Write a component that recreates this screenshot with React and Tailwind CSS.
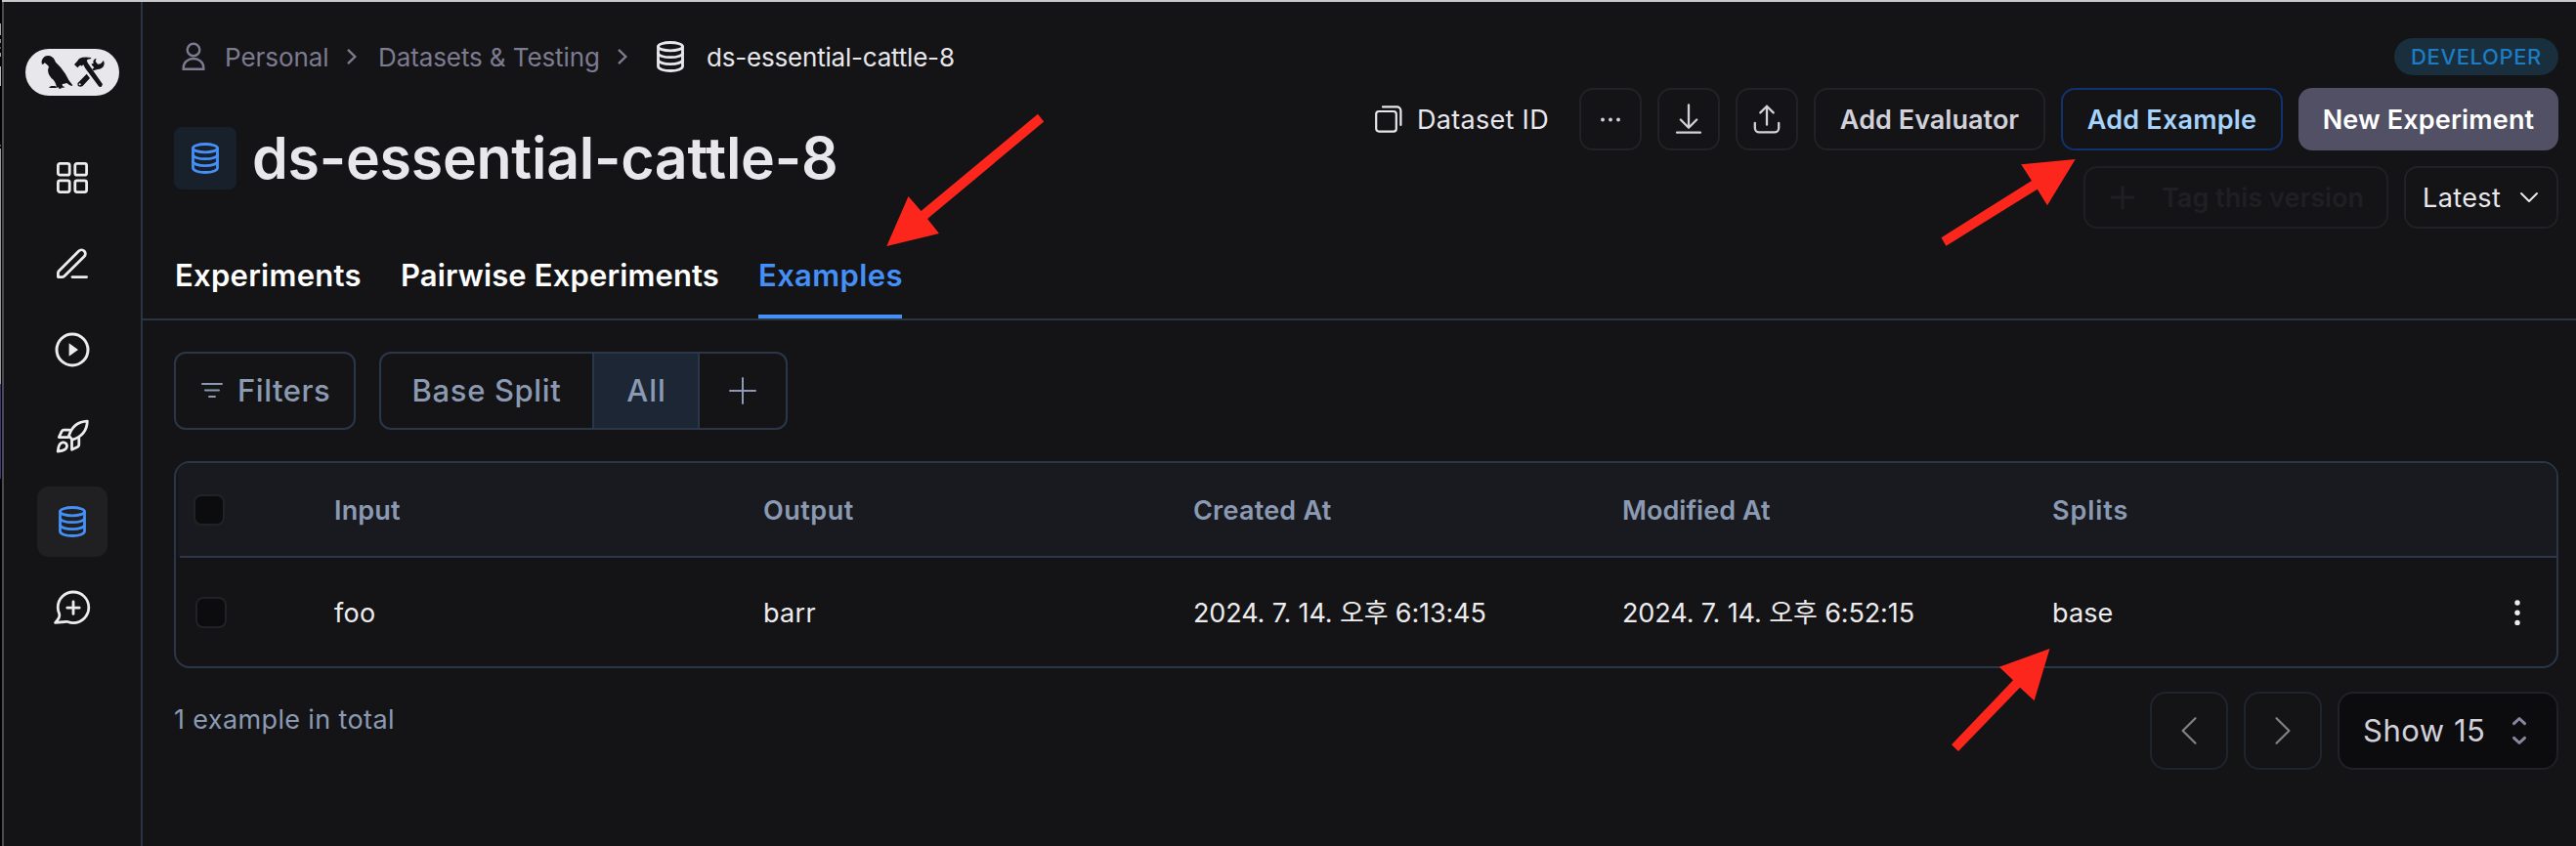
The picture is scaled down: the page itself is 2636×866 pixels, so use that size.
const svgBase = {
  fill: 'none',
  stroke: 'currentColor',
  strokeLinecap: 'round',
  strokeLinejoin: 'round',
};

function Logo() {
  return (
    <svg className="h-12 w-24 shrink-0" viewBox="18 30 288 144">
      <rect x="18" y="30" width="288" height="144" rx="72" fill="#e8e7ec" />
      <g fill="#141416">
        <path d="M68 76V67Q73 51 88 51Q101 52 107 63L111 71Q128 86 141 107L151 126L163 142L160 144L153 141L145 135Q137 138 131 138L132 144L138 147L137 149H129L127 152H121L119 148L110 150H92L91 147L98 145L93 144H108L114 146L109 133L104 125Q88 113 87 95L90 84L83 77L77 73L72 78Z" />
        <path d="M168 78L177 68L183 60Q197 53 219 57L220 60L210 62L206 66L210 74L255 139L251 147L244 146L202 90L196 79L190 83L188 80L184 82L178 88Z" />
        <path d="M236 59L233 68L240 77L249 76L258 66Q262 73 258 83Q253 92 239 93L227 97L223 92L229 88L220 77L227 74Q223 63 236 59Z" />
        <path
          fillRule="evenodd"
          d="M178 136L206 107L216 120L194 144Q186 149 179 143ZM185 136A3 3 0 1 0 185 142A3 3 0 1 0 185 136Z"
        />
      </g>
    </svg>
  );
}

function DatabaseIcon({ className = '' }) {
  return (
    <svg className={`h-8 shrink-0 ${className}`} viewBox="0 0 28 32" preserveAspectRatio="none" {...svgBase} strokeWidth="2.8">
      <ellipse cx="14" cy="5.7" rx="12.5" ry="4.2" />
      <path d="M1.5 5.7v20.4c0 2.4 5.6 4.4 12.5 4.4s12.5-2 12.5-4.4V5.7" />
      <path d="M1.5 12.4c0 2.4 5.6 4.3 12.5 4.3s12.5-1.9 12.5-4.3" />
      <path d="M1.5 19.3c0 2.4 5.6 4.3 12.5 4.3s12.5-1.9 12.5-4.3" />
    </svg>
  );
}

function GridIcon() {
  return (
    <svg className="size-8" viewBox="0 0 32 32" {...svgBase} strokeWidth="2.8">
      <rect x="1.4" y="1.4" width="11.8" height="11.8" rx="2" />
      <rect x="18.8" y="1.4" width="11.8" height="11.8" rx="2" />
      <rect x="1.4" y="18.8" width="11.8" height="11.8" rx="2" />
      <rect x="18.8" y="18.8" width="11.8" height="11.8" rx="2" />
    </svg>
  );
}

function EditIcon() {
  return (
    <svg className="h-8 w-8" viewBox="0 0 32 32" {...svgBase} strokeWidth="2.8">
      <path d="M16 29.6h14.6" />
      <path d="M1.4 29.6v-4.2c.1-.9.4-1.6 1-2.2L22.6 3a3.95 3.95 0 0 1 5.6 5.6L8 28.6c-.6.6-1.3.9-2.2 1Z" />
    </svg>
  );
}

function PlayIcon() {
  return (
    <svg className="h-9 w-9" viewBox="0 0 36 36" {...svgBase} strokeWidth="3">
      <circle cx="18" cy="18" r="16" />
      <path d="M14.6 11.2L24 18l-9.4 6.8Z" fill="currentColor" stroke="none" />
    </svg>
  );
}

function RocketIcon() {
  return (
    <svg className="h-9 w-9" viewBox="0 0 36 36" {...svgBase} strokeWidth="2.8">
      <path d="M14.5 18.2C17.2 9.5 23 3.6 33.3 3.2C33 13.5 27 19.3 18 22.2Z" />
      <path d="M15 12.2H9.4c-1 0-1.8.5-2.3 1.4L4.3 19.6H14" />
      <path d="M24.8 20.8v6.4c0 1-.5 1.8-1.4 2.3L17.5 32.2V22.2" />
      <path d="M11.8 26.2a4.2 4.2 0 0 1-1.6 6c-2 1.2-4.2 1.5-7 1.8c.2-2.8.6-5.3 1.8-7a4.2 4.2 0 0 1 6.8-.8Z" />
    </svg>
  );
}

function MessagePlusIcon() {
  return (
    <svg className="h-9 w-[38px]" viewBox="0 0 38 36" {...svgBase} strokeWidth="2.8">
      <path d="M20 2a15.8 15.8 0 1 1 0 31.6c-2.3 0-4-.5-5.6-1.1c-1-.4-1.9-.2-3 0L1.6 33.4c1.5-1.7 2.8-3.3 3.8-5.3c.7-1.4.7-2.6.2-4C4.7 22 4.2 19.8 4.2 17.7A15.8 15.8 0 0 1 20 2Z" />
      <path d="M20 12v12.4M13.8 18.2h12.4" />
    </svg>
  );
}

function PersonIcon() {
  return (
    <svg className="h-[30px] w-6 shrink-0" viewBox="0 0 24 30" {...svgBase} strokeWidth="2.4">
      <circle cx="12" cy="8" r="6.3" />
      <path d="M1.7 27.7v-1.4a10.3 9.3 0 0 1 20.6 0v1.4Z" strokeLinejoin="miter" />
    </svg>
  );
}

function CrumbChevron({ className = '' }) {
  return (
    <svg className={`h-[18px] w-3 shrink-0 text-[#7c7b90] ${className}`} viewBox="0 0 12 18" {...svgBase} strokeLinecap="butt" strokeLinejoin="miter" strokeWidth="2.4">
      <path d="M2 1.8L9.3 9L2 16.2" />
    </svg>
  );
}

function CopyIcon() {
  return (
    <svg className="h-7 w-7 shrink-0" viewBox="0 0 28 28" {...svgBase} strokeWidth="2.2">
      <rect x="1.2" y="6" width="20.6" height="20.6" rx="2.8" />
      <path d="M8 1.4H22.4a4 4 0 0 1 4 4V20" />
    </svg>
  );
}

function Arrows() {
  return (
    <svg className="pointer-events-none absolute inset-0 h-[866px] w-[2636px]" viewBox="0 0 2636 866" fill="#fd261c">
      <path d="M907.3 252L929.5 201L942.5 216L1062 116.7L1068.2 124.5L949 224L961 239Z" />
      <path d="M2123.7 163L2068.2 168.2L2079 185L1986.5 243.3L1991.4 251.7L2084.8 193.7L2095 210.3Z" />
      <path d="M2097.5 664L2045.8 682.7L2060 696.3L1997 762.3L2004 769L2067 703.7L2081.6 717.3Z" />
    </svg>
  );
}

function Sidebar() {
  return (
    <aside className="flex w-[142px] shrink-0 flex-col items-center border-r-2 border-[#2a3543] pt-12 text-[#ececee]">
      <Logo />
      <nav className="mt-12 flex flex-col gap-4">
        <div className="flex size-[72px] items-center justify-center"><GridIcon /></div>
        <div className="flex size-[72px] items-center justify-center"><EditIcon /></div>
        <div className="flex size-[72px] items-center justify-center"><PlayIcon /></div>
        <div className="flex size-[72px] items-center justify-center"><RocketIcon /></div>
        <div className="flex size-[72px] items-center justify-center rounded-xl bg-[#202022] text-[#4490f6]">
          <DatabaseIcon className="w-7" />
        </div>
        <div className="flex size-[72px] items-center justify-center"><MessagePlusIcon /></div>
      </nav>
    </aside>
  );
}

function Breadcrumb() {
  return (
    <div className="flex h-10 items-center pl-2 text-[26px] whitespace-nowrap text-[#7c7b90]">
      <PersonIcon />
      <span className="ml-5 w-[106px] tracking-[-0.05px]">Personal</span>
      <CrumbChevron className="ml-[18px]" />
      <span className="ml-[21px] w-[226px] tracking-[-0.1px]">Datasets &amp; Testing</span>
      <CrumbChevron className="ml-[18px]" />
      <DatabaseIcon className="ml-[29px] w-7 text-[#e8e7ec]" />
      <span className="ml-[23px] tracking-[-0.2px] text-[#e8e7ec]">ds-essential-cattle-8</span>
    </div>
  );
}

function Actions() {
  const square = 'flex size-16 shrink-0 items-center justify-center rounded-[14px] border-2 border-[#212126]';
  return (
    <div className="flex items-center gap-4 text-[27px] font-semibold whitespace-nowrap text-[#d2d1da]">
      <div className="flex w-[193px] items-center font-normal text-[#e8e7ec]">
        <CopyIcon />
        <span className="ml-[15px] pt-0.5 tracking-[0.3px]">Dataset ID</span>
      </div>
      <div className={square}>
        <svg className="h-6 w-6" viewBox="0 0 24 24" fill="currentColor">
          <circle cx="4" cy="12.5" r="1.9" />
          <circle cx="12" cy="12.5" r="1.9" />
          <circle cx="20" cy="12.5" r="1.9" />
        </svg>
      </div>
      <div className={square}>
        <svg className="h-8 w-8" viewBox="0 0 32 32" {...svgBase} strokeWidth="2.3">
          <path d="M16 2v23M7.8 17L16 25.2L24.2 17M4 30.2h24" transform="translate(0 -.5)" />
        </svg>
      </div>
      <div className={square}>
        <svg className="h-8 w-8" viewBox="0 0 32 32" {...svgBase} strokeWidth="2.3">
          <path d="M16 22.5V3.5M9.3 10.2L16 3.5L22.7 10.2M3.8 20.8v5a4.4 4.4 0 0 0 4.4 4.4h15.6a4.4 4.4 0 0 0 4.4-4.4v-5" transform="translate(0 -.8)" />
        </svg>
      </div>
      <div className="flex h-16 w-[237px] items-center justify-center rounded-[14px] border-2 border-[#212126] pt-0.5 tracking-[0.04px]">Add Evaluator</div>
      <div className="flex h-16 w-[227px] items-center justify-center rounded-[14px] border-2 border-[#11316f] pt-0.5 tracking-[0.22px] text-[#a6d3fb]">Add Example</div>
      <div className="flex h-16 w-[266px] items-center justify-center rounded-[14px] bg-[#515064] pt-0.5 tracking-[0.16px] text-white">New Experiment</div>
    </div>
  );
}

function VersionRow() {
  return (
    <div className="mt-4 flex gap-4 text-[27px] whitespace-nowrap">
      <div className="flex h-16 w-[312px] items-center rounded-[14px] border-2 border-[#1f1f24] pl-[25px] font-semibold text-[#1f1f24]">
        <svg className="size-[26px]" viewBox="0 0 26 26" fill="none" stroke="currentColor" strokeWidth="3">
          <path d="M13 1v24M1 13h24" />
        </svg>
        <span className="ml-[27px] pt-0.5 tracking-[0.02px]">Tag this version</span>
      </div>
      <div className="flex h-16 w-[158px] items-center rounded-[14px] border-2 border-[#212126] pl-[17px] text-[#e8e7ec]">
        <span className="pt-0.5 tracking-[0.4px]">Latest</span>
        <svg className="ml-[19px] h-3 w-5" viewBox="0 0 20 12" {...svgBase} strokeWidth="2">
          <path d="M2 2l8 8l8-8" />
        </svg>
      </div>
    </div>
  );
}

function Header() {
  return (
    <header className="flex h-[326px] shrink-0 justify-between border-b-2 border-[#2a3543] pr-[18px] pl-8">
      <div className="flex flex-col pt-9">
        <Breadcrumb />
        <div className="mt-[52px] flex h-16 items-center">
          <div className="flex size-16 items-center justify-center rounded-lg bg-[#18202c] text-[#4490f6]">
            <DatabaseIcon className="w-7" />
          </div>
          <h1 className="ml-4 pb-0.5 text-[59px] leading-none font-semibold tracking-[-0.25px] whitespace-nowrap text-[#e8e7ec]">ds-essential-cattle-8</h1>
        </div>
        <div className="mt-auto flex h-[88px] text-[31px] font-semibold whitespace-nowrap text-white">
          <div className="flex w-[191px] items-center pl-px tracking-[0.28px]">Experiments</div>
          <div className="ml-10 flex w-[327px] items-center pl-px tracking-[0.14px]">Pairwise Experiments</div>
          <div className="ml-10 flex w-[147px] items-center border-b-4 border-[#4490f6] pt-1 tracking-[0.38px] text-[#4490f6]">Examples</div>
        </div>
      </div>
      <div className="flex flex-col items-end pt-[37px]">
        <div className="mb-[13px] flex h-[38px] w-[168px] items-center justify-center rounded-full bg-[#192f3e] text-[22px] font-medium tracking-[0.62px] text-[#1d7cc4]">DEVELOPER</div>
        <Actions />
        <VersionRow />
      </div>
    </header>
  );
}

function Toolbar() {
  return (
    <div className="mt-8 flex gap-6 text-[31px] font-medium whitespace-nowrap text-[#8b9ab2]">
      <div className="flex h-20 w-[186px] items-center rounded-xl border-2 border-[#2a3748] pl-[26px]">
        <svg className="h-[18px] w-[22px]" viewBox="0 0 22 18" {...svgBase} strokeWidth="2">
          <path d="M1 2h20M4 8.5h14M8 15h6" />
        </svg>
        <span className="ml-[15px] tracking-[0.53px]">Filters</span>
      </div>
      <div className="flex h-20 w-[418px] overflow-hidden rounded-xl border-2 border-[#2a3748]">
        <div className="flex w-[216px] items-center justify-center tracking-[0.63px]">Base Split</div>
        <div className="flex w-[110px] items-center justify-center border-x-2 border-[#2a3748] bg-[#1c2634] pl-px tracking-[1px]">All</div>
        <div className="flex w-[88px] items-center justify-center">
          <svg className="size-7" viewBox="0 0 28 28" {...svgBase} strokeWidth="2">
            <path d="M14 1v26M1 14h26" />
          </svg>
        </div>
      </div>
    </div>
  );
}

function Checkbox({ className = '' }) {
  return <div className={`size-8 rounded-lg border-2 border-[#212126] bg-[#0c0c0e] ${className}`} />;
}

const columns = 'grid grid-cols-[160px_439px_440px_439px_440px_1fr] items-center ml-0.5 text-[27px] whitespace-nowrap';

function ExamplesTable() {
  return (
    <section className="mt-8 flex h-[212px] flex-col overflow-hidden rounded-2xl border-2 border-[#2a3748]">
      <div className={`h-[95px] bg-[#191a1f] font-semibold text-[#8b9ab2] ${columns}`}>
        <Checkbox className="ml-4" />
        <span className="pt-[3px] tracking-[0.16px]">Input</span>
        <span className="pt-[3px] tracking-[0.5px]">Output</span>
        <span className="pt-[3px] tracking-[0.23px]">Created At</span>
        <span className="pt-[3px] tracking-[0.04px]">Modified At</span>
        <span className="pt-[3px] tracking-[0.93px]">Splits</span>
      </div>
      <div className="ml-1 h-0.5 shrink-0 bg-[#2a3748]" />
      <div className={`h-[111px] text-[#ececee] ${columns}`}>
        <Checkbox className="ml-[18px]" />
        <span className="pt-[3px] tracking-[0.3px]">foo</span>
        <span className="pt-[3px] tracking-[0.32px]">barr</span>
        <span className="pt-[3px] tracking-[-0.13px]">2024. 7. 14. 오후 6:13:45</span>
        <span className="pt-[3px] tracking-[-0.11px]">2024. 7. 14. 오후 6:52:15</span>
        <div className="flex items-center justify-between pr-9">
          <span className="pt-[3px] tracking-[0.1px]">base</span>
          <svg className="h-7 w-2" viewBox="0 0 8 28" fill="currentColor">
            <circle cx="4" cy="4" r="2.7" />
            <circle cx="4" cy="14.2" r="2.7" />
            <circle cx="4" cy="24.4" r="2.7" />
          </svg>
        </div>
      </div>
    </section>
  );
}

function Footer() {
  return (
    <div className="mt-6 flex items-start justify-between whitespace-nowrap">
      <p className="mt-[15px] text-[27px] leading-7 tracking-[0.37px] text-[#8b9ab2]">1 example in total</p>
      <div className="flex gap-4">
        <div className="flex size-20 items-center justify-center rounded-2xl border-2 border-[#1e2530] text-[#828284]">
          <svg className="h-[30px] w-[18px]" viewBox="0 0 18 30" {...svgBase} strokeWidth="2.2">
            <path d="M15.5 2.2L2.6 15l12.9 12.8" />
          </svg>
        </div>
        <div className="flex size-20 items-center justify-center rounded-2xl border-2 border-[#1e2530] text-[#828284]">
          <svg className="h-[30px] w-[18px]" viewBox="0 0 18 30" {...svgBase} strokeWidth="2.2">
            <path d="M2.5 2.2L15.4 15L2.500 27.8" />
          </svg>
        </div>
        <div className="flex h-20 w-[226px] items-center rounded-2xl border-2 border-[#212126] bg-[#0c0c0e] pl-6 text-[31px] text-[#d2d1da]">
          <span className="tracking-[0.51px]">Show 15</span>
          <svg className="ml-[27px] h-8 w-4 text-[#8987a0]" viewBox="0 0 16 32" {...svgBase} strokeWidth="3">
            <path d="M2.5 8.7L8 3.5l5.500 5.200M2.500 23.300L8 28.500l5.500-5.200" />
          </svg>
        </div>
      </div>
    </div>
  );
}

export default function App() {
  return (
    <div className="relative flex h-[866px] w-[2636px] overflow-hidden bg-[#141416] font-['Inter','Noto_Sans_CJK_KR',sans-serif]">
      <div className="flex w-0.5 shrink-0 flex-col bg-black">
        <div className="mt-6 h-3 w-px bg-[#a5a5a5]" />
        <div className="mt-1 h-1 w-px bg-[#8a8a8a]" />
        <div className="mt-1 h-0.5 w-px bg-[#5a5a5a]" />
        <div className="mt-1 h-1 w-px bg-[#a5a5a5]" />
        <div className="mt-2.5 h-5 w-px bg-[#b5b5b5]" />
        <div className="mt-[60px] h-0.5 w-px bg-[#5a5a5a]" />
        <div className="mt-0.5 h-[241px] w-px bg-[#9b9b9b]" />
        <div className="h-[97px] w-px bg-[#4b2e86]" />
      </div>
      <div className="flex flex-1 flex-col border-t-2 border-t-[#c6c8cb]">
        <div className="flex flex-1 border-l-2 border-l-[#4a4b4e]">
          <Sidebar />
          <div className="flex flex-1 flex-col">
            <Header />
            <main className="flex flex-col pr-[18px] pl-8">
              <Toolbar />
              <ExamplesTable />
              <Footer />
            </main>
          </div>
        </div>
      </div>
      <Arrows />
    </div>
  );
}
